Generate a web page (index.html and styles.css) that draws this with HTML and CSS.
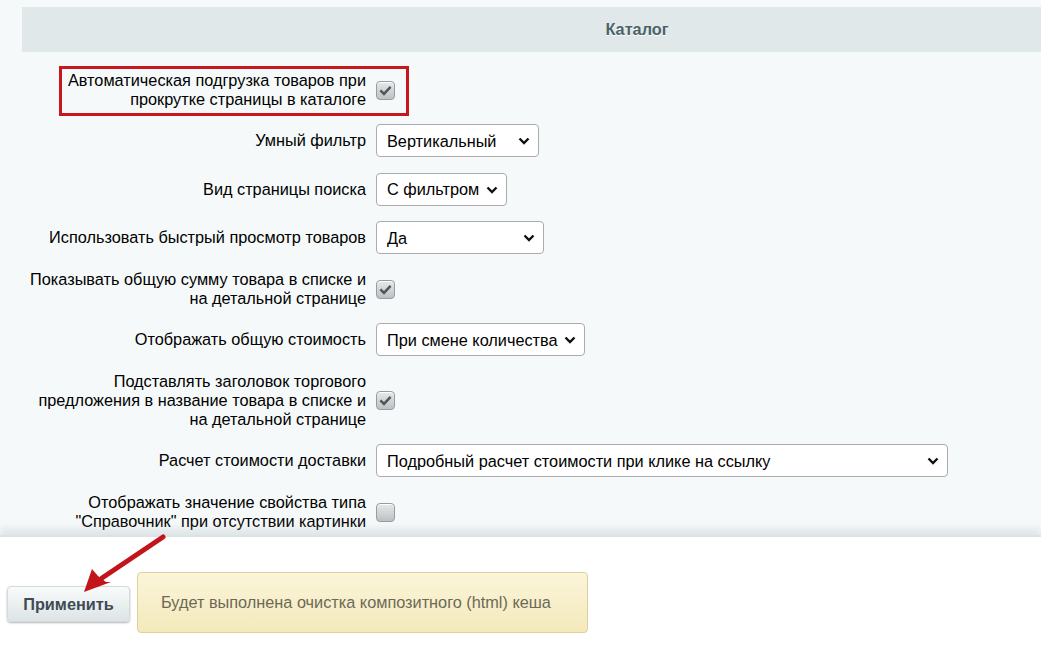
FILE: index.html
```html
<!DOCTYPE html>
<html lang="ru">
<head>
<meta charset="utf-8">
<title>Настройки каталога</title>
<link rel="stylesheet" href="styles.css">
</head>
<body>
<div class="page">
  <main class="settings">
    <div class="section-head">Каталог</div>
    <div class="form">
      <div class="row">
        <label class="label">Автоматическая подгрузка товаров при<br>прокрутке страницы в каталоге</label>
        <div class="value"><span class="check checked"><svg viewBox="0 0 18 18"><path d="M3.6 8.8l3.8 3.8 7-7.4"/></svg></span></div>
      </div>
      <div class="row">
        <label class="label">Умный фильтр</label>
        <div class="value"><span class="select w-filter"><select><option>Вертикальный</option></select><svg viewBox="0 0 12 8"><path d="M1.5 1.5l4.5 4.5 4.5-4.5"/></svg></span></div>
      </div>
      <div class="row">
        <label class="label">Вид страницы поиска</label>
        <div class="value"><span class="select w-search"><select><option>С фильтром</option></select><svg viewBox="0 0 12 8"><path d="M1.5 1.5l4.5 4.5 4.5-4.5"/></svg></span></div>
      </div>
      <div class="row">
        <label class="label">Использовать быстрый просмотр товаров</label>
        <div class="value"><span class="select w-quick"><select><option>Да</option></select><svg viewBox="0 0 12 8"><path d="M1.5 1.5l4.5 4.5 4.5-4.5"/></svg></span></div>
      </div>
      <div class="row">
        <label class="label">Показывать общую сумму товара в списке и<br>на детальной странице</label>
        <div class="value"><span class="check checked"><svg viewBox="0 0 18 18"><path d="M3.6 8.8l3.8 3.8 7-7.4"/></svg></span></div>
      </div>
      <div class="row">
        <label class="label">Отображать общую стоимость</label>
        <div class="value"><span class="select w-total"><select><option>При смене количества</option></select><svg viewBox="0 0 12 8"><path d="M1.5 1.5l4.5 4.5 4.5-4.5"/></svg></span></div>
      </div>
      <div class="row">
        <label class="label">Подставлять заголовок торгового<br>предложения в название товара в списке и<br>на детальной странице</label>
        <div class="value"><span class="check checked"><svg viewBox="0 0 18 18"><path d="M3.6 8.8l3.8 3.8 7-7.4"/></svg></span></div>
      </div>
      <div class="row">
        <label class="label">Расчет стоимости доставки</label>
        <div class="value"><span class="select w-delivery"><select><option>Подробный расчет стоимости при клике на ссылку</option></select><svg viewBox="0 0 12 8"><path d="M1.5 1.5l4.5 4.5 4.5-4.5"/></svg></span></div>
      </div>
      <div class="row">
        <label class="label">Отображать значение свойства типа<br>"Справочник" при отсутствии картинки</label>
        <div class="value"><span class="check"></span></div>
      </div>
    </div>
  </main>

  <footer class="footer">
    <button class="btn-apply" type="button">Применить</button>
    <div class="note">Будет выполнена очистка композитного (html) кеша</div>
  </footer>

  <!-- highlight frame and pointer drawn over the form -->
  <div class="highlight"></div>
  <svg class="pointer" viewBox="0 0 100 70" width="100" height="70">
    <path class="pointer-line" d="M85 2 L24 43"/>
    <path class="pointer-head" d="M6 57 L14 34 L20 41 L28 47 L33 47 Z"/>
  </svg>
</div>
</body>
</html>
```

FILE: styles.css
```css
* { box-sizing: border-box; }

html, body {
  margin: 0;
  padding: 0;
  overflow: hidden;
}

body {
  background: #f5f9f9;
  font-family: "Liberation Sans", Arial, sans-serif;
  font-size: 16.3px;
  color: #000;
}

.page {
  position: relative;
  width: 1041px;
  height: 653px;
  display: flex;
  flex-direction: column;
}

.settings {
  flex: 1;
  padding-top: 7px;
  overflow: hidden;
}

.section-head {
  margin-left: 22px;
  width: 1230px;
  height: 45px;
  line-height: 45px;
  background: #e0e8ea;
  text-align: center;
  font-weight: bold;
  font-size: 16.3px;
  color: #4b6267;
  text-shadow: 0 1px 0 #fff;
}

.form {
  padding-top: 11px;
}

.row {
  display: grid;
  grid-template-columns: 371px 1fr;
  align-items: center;
  padding: 7.75px 0;
}

.label {
  text-align: right;
  line-height: 19px;
  padding-left: 20px;
  padding-right: 5px;
}

.value {
  padding-left: 5px;
  display: flex;
  align-items: center;
}

/* selects */
.select {
  position: relative;
  display: inline-block;
  height: 33px;
}

.select select {
  appearance: none;
  -webkit-appearance: none;
  width: 100%;
  height: 33px;
  border: 1px solid #a9abad;
  border-radius: 4px;
  background: #fff;
  font-family: "Liberation Sans", Arial, sans-serif;
  font-size: 16.3px;
  color: #000;
  padding: 0 22px 0 10px;
  margin: 0;
}

.select svg {
  position: absolute;
  right: 9px;
  top: 13px;
  width: 12px;
  height: 8px;
  fill: none;
  stroke: #111;
  stroke-width: 2.4;
  pointer-events: none;
}

.w-filter { width: 163px; }
.w-search { width: 131px; }
.w-quick { width: 168px; }
.w-total { width: 209px; }
.w-delivery { width: 572px; }

/* checkboxes */
.check {
  display: inline-block;
  width: 19px;
  height: 19px;
  border-radius: 4px;
  border: 1px solid #979ca1;
  background: linear-gradient(#e6e9ea, #bcc1c5);
  box-shadow: inset 0 1px 0 #fff;
  margin-top: 1px;
}

.check svg {
  display: block;
  width: 17px;
  height: 17px;
  fill: none;
  stroke: #50555a;
  stroke-width: 2.6;
}

/* bottom panel */
.footer {
  height: 118px;
  background: #fff;
  border-top: 2px solid #dbe3e5;
  box-shadow: 0 -6px 8px rgba(180, 192, 196, 0.35);
  display: flex;
  align-items: center;
  padding-left: 7px;
  padding-top: 16px;
  gap: 7px;
  position: relative;
}

.btn-apply {
  width: 123px;
  height: 36px;
  margin-top: 2px;
  border: 1px solid #d4dadd;
  border-radius: 4px;
  background: linear-gradient(#f9fbfb, #dde4e6);
  box-shadow: 0 1px 2px rgba(0, 0, 0, 0.3);
  font-family: "Liberation Sans", Arial, sans-serif;
  font-weight: bold;
  font-size: 16.3px;
  color: #3f4b54;
  padding: 0;
}

.note {
  width: 451px;
  height: 61px;
  margin-top: -1px;
  border: 1px solid #dcd09d;
  border-radius: 4px;
  background: linear-gradient(#fbf5d9, #f4e9bc);
  color: #6c6957;
  font-size: 16.3px;
  display: flex;
  align-items: center;
  padding-left: 23px;
}

/* annotation overlays */
.highlight {
  position: absolute;
  left: 59px;
  top: 66px;
  width: 350px;
  height: 50px;
  border: 3px solid #c8161d;
}

.pointer {
  position: absolute;
  left: 78px;
  top: 535px;
  overflow: visible;
}

.pointer-line {
  stroke: #c1141b;
  stroke-width: 5;
  stroke-linecap: round;
  fill: none;
}

.pointer-head {
  fill: #c1141b;
}
```
